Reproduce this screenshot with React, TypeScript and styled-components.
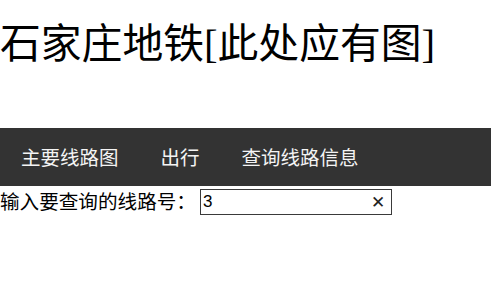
import React, { useState } from 'react'
import styled, { createGlobalStyle } from 'styled-components'

const GlobalStyle = createGlobalStyle`
  html, body {
    margin: 0;
    padding: 0;
    background: #fff;
  }
  body {
    font-family: 'Liberation Serif', 'Noto Sans CJK SC', serif;
    color: #000;
  }
`

const Title = styled.h1`
  margin: 21px 0 59px;
  font-size: 40.8px;
  line-height: 48px;
  font-weight: normal;
  white-space: nowrap;
`

const NavBar = styled.ul`
  display: flex;
  align-items: center;
  height: 58px;
  margin: 0;
  padding: 0;
  list-style: none;
  background: #333;
`

const NavItem = styled.li`
  padding: 0 21px;
  font-family: 'Noto Sans CJK SC', 'Liberation Sans', sans-serif;
  font-size: 19.5px;
  line-height: 58px;
  color: #f4f4f4;
  white-space: nowrap;
  cursor: pointer;
`

const SearchRow = styled.div`
  display: flex;
  align-items: center;
  padding-top: 3px;
`

const Label = styled.label`
  font-size: 19.6px;
  line-height: 25px;
  white-space: nowrap;
  margin-right: 4px;
`

const InputBox = styled.div`
  display: flex;
  align-items: center;
  box-sizing: border-box;
  width: 192px;
  height: 26px;
  border: 1px solid #3a3a3a;
  background: #fff;
`

const Input = styled.input`
  flex: 1;
  min-width: 0;
  border: none;
  outline: none;
  padding: 0 0 0 2px;
  font-family: 'Liberation Sans', Arial, sans-serif;
  font-size: 17px;
  color: #000;
  background: transparent;
`

const ClearButton = styled.button`
  border: none;
  background: none;
  padding: 0 6px 0 4px;
  font-family: 'Liberation Sans', Arial, sans-serif;
  font-size: 17px;
  line-height: 1;
  color: #222;
  cursor: pointer;
`

const navItems = ['主要线路图', '出行', '查询线路信息']

export default function App() {
  const [line, setLine] = useState('3')
  return (
    <>
      <GlobalStyle />
      <Title>石家庄地铁[此处应有图]</Title>
      <NavBar>
        {navItems.map(item => (
          <NavItem key={item}>{item}</NavItem>
        ))}
      </NavBar>
      <SearchRow>
        <Label htmlFor='line'>输入要查询的线路号：</Label>
        <InputBox>
          <Input id='line' value={line} onChange={e => setLine(e.target.value)} />
          <ClearButton onClick={() => setLine('')}>✕</ClearButton>
        </InputBox>
      </SearchRow>
    </>
  )
}
